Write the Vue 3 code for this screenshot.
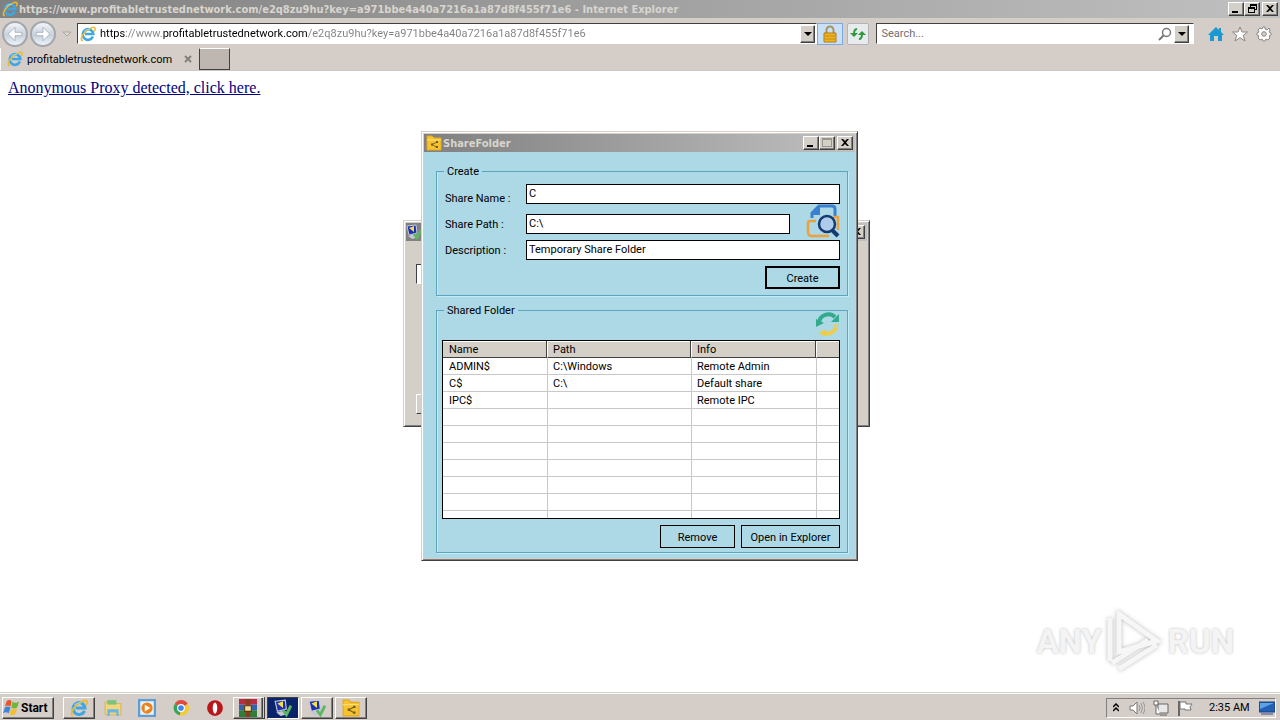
<template>
  <div class="desktop">
    <svg class="sprite" aria-hidden="true">
      <symbol id="ie" viewBox="0 0 16 16">
        <path d="M12.9 10.6A5.3 5.3 0 1 1 13.3 8H5" fill="none" stroke="#3fa6e2" stroke-width="2.600" />
        <path d="M3 14.6C0 14.8 1 9.6 6 5.2 10 1.800 15 0 15.200 2.600c.1 1-.4 2-1 2.800" fill="none" stroke="#efb92a" stroke-width="1.500" />
        <path d="M4 5.500C5.500 3.600 8 3 10 3.600" fill="none" stroke="#8fd8f8" stroke-width="1" />
      </symbol>
      <symbol id="folder" viewBox="0 0 16 16">
        <path d="M1 1h5l2 2h7v12H1z" fill="#f7c331" stroke="#e3a81c" />
        <path d="M1 5h14" stroke="#ffe27a" />
        <path d="M11 7L6 9.500l5 3" fill="none" stroke="#7b6420" />
        <path d="M5 8.500h2v2H5zM10 6h2v2h-2zM10 11h2v2h-2z" fill="#6c5a26" />
      </symbol>
      <symbol id="monitor" viewBox="0 0 16 16">
        <path d="M1 2l9-1 1 8-8 2z" fill="#1c2fb4" stroke="#c9c9d8" />
        <path d="M3 4l5 4V2z" fill="#f2e33c" />
        <path d="M2 12l7-2 4 3-7 2z" fill="#c4c7ce" />
        <path d="M8 10l3 4 4-8" fill="none" stroke="#5cb860" stroke-width="2.500" />
      </symbol>
    </svg>

    <header class="browser">
      <div class="title-bar">
        <svg class="icon16"><use href="#ie" /></svg>
        <span class="title-text">https://www.profitabletrustednetwork.com/e2q8zu9hu?key=a971bbe4a40a7216a1a87d8f455f71e6 - Internet Explorer</span>
        <div class="caption">
          <button v-for="kind in ['min', 'restore', 'close']" :key="kind" :class="['cap', kind]" :aria-label="kind">
            <svg viewBox="0 0 12 10"><path :d="glyphs[kind]" /></svg>
          </button>
        </div>
      </div>

      <div class="toolbar">
        <div class="nav">
          <button class="round" aria-label="Back">
            <svg viewBox="0 0 26 26"><path d="M13 5l-8 8 8 8v-6h8v-4h-8z" /></svg>
          </button>
          <button class="round" aria-label="Forward">
            <svg viewBox="0 0 26 26"><path d="M13 5l8 8-8 8v-6H5v-4h8z" /></svg>
          </button>
          <svg class="history" viewBox="0 0 10 6"><path d="M1 1h8L5 5z" fill="#dedad6" stroke="#aaa6a0" /></svg>
        </div>
        <div class="field address">
          <svg class="icon16"><use href="#ie" /></svg>
          <input v-model="url" class="url" type="text" aria-label="Address">
          <button class="drop" aria-label="Show address list"><svg viewBox="0 0 8 4"><path d="M0 0h8L4 4z" /></svg></button>
        </div>
        <button class="lock" aria-label="Security report">
          <svg viewBox="0 0 16 18">
            <path d="M4.500 9V5a3.500 3.500 0 0 1 7 0v4" fill="none" stroke="#a8945c" stroke-width="2" />
            <path d="M2 8h12v9H2z" fill="#eeb422" stroke="#b67c10" />
            <path d="M3 11h10M3 14h10" stroke="#c98a12" />
          </svg>
        </button>
        <button class="refresh" aria-label="Refresh">
          <svg viewBox="0 0 16 16">
            <path d="M7 3C4.500 3 4 5 4 8M9 13c2.500 0 3-2 3-5" fill="none" stroke="#2f9a3c" stroke-width="2" />
            <path d="M0 7h8l-4 4zM8 9h8l-4-4z" fill="#2f9a3c" />
          </svg>
        </button>
        <div class="field search">
          <input v-model="query" type="text" placeholder="Search..." aria-label="Search">
          <svg class="lens" viewBox="0 0 14 14"><path d="M1 13l5-5" stroke-width="2" /><circle cx="8.500" cy="5.500" r="4" stroke-width="1.500" /></svg>
          <button class="drop" aria-label="Search providers"><svg viewBox="0 0 8 4"><path d="M0 0h8L4 4z" /></svg></button>
        </div>
        <div class="tools">
          <button aria-label="Home">
            <svg viewBox="0 0 16 16"><path d="M8 1L0 9h2v6h4v-5h4v5h4V9h2l-3-3V2h-2v2z" fill="#1b9ad2" /></svg>
          </button>
          <button aria-label="Favorites">
            <svg viewBox="0 0 16 16"><path d="M8 1l2 5h5.500l-4.300 3.500L13 15l-5-3.300L3 15l1.800-5.500L.5 6H6z" fill="#fff" stroke="#8a8783" /></svg>
          </button>
          <button aria-label="Tools">
            <svg viewBox="0 0 16 16">
              <path d="M7 1h2v2l2 1 2-2 1 2-1 2 2 1v2l-2 1 1 2-2 2-2-1-1 2H7l-1-2-2 1-2-2 1-2-2-1V7l2-1-1-2 2-2 2 1z" fill="#fff" stroke="#8a8783" />
              <circle cx="8" cy="8" r="2.300" fill="#d4cdc8" stroke="#8a8783" />
            </svg>
          </button>
        </div>
      </div>

      <nav class="tabs">
        <div class="tab">
          <svg class="icon16"><use href="#ie" /></svg>
          <span>profitabletrustednetwork.com</span>
          <button class="tab-close" aria-label="Close tab"><svg viewBox="0 0 8 8"><path d="M1 1l6 6M7 1L1 7" /></svg></button>
        </div>
        <button class="new-tab" aria-label="New tab"></button>
      </nav>
    </header>

    <main class="page">
      <a class="notice" href="#">Anonymous Proxy detected, click here.</a>

      <section class="window back-window">
        <div class="title-bar">
          <svg class="icon16"><use href="#monitor" /></svg>
          <div class="caption">
            <button class="cap close" aria-label="close"><svg viewBox="0 0 12 10"><path :d="glyphs.close" /></svg></button>
          </div>
        </div>
        <div class="back-body">
          <input type="text" aria-label="Value">
          <button aria-label="OK"></button>
        </div>
      </section>

      <section class="window share-window">
        <div class="title-bar">
          <svg class="icon16"><use href="#folder" /></svg>
          <span class="title-text">ShareFolder</span>
          <div class="caption">
            <button v-for="kind in ['min', 'max', 'close']" :key="kind" :class="['cap', kind]" :aria-label="kind">
              <svg viewBox="0 0 12 10"><path :d="glyphs[kind]" /></svg>
            </button>
          </div>
        </div>
        <div class="share-body">
          <fieldset>
            <legend>Create</legend>
            <form class="create-form" @submit.prevent>
              <label for="share-name">Share Name :</label>
              <input id="share-name" v-model="form.name" class="wide" type="text">
              <label for="share-path">Share Path :</label>
              <input id="share-path" v-model="form.path" type="text">
              <button class="browse" type="button" aria-label="Browse">
                <svg viewBox="0 0 34 34">
                  <path d="M6 14V9l7-7h13q3 0 3 3v7" fill="none" stroke="#3b7fd0" stroke-width="3" />
                  <path d="M5 11l9-9v9z" fill="#3b7fd0" />
                  <path d="M10 17H4q-2 0-2 2v9q0 4 4 4h17M27 13h5v13" fill="none" stroke="#eda13b" stroke-width="2.500" />
                  <circle cx="21" cy="20" r="8" fill="#aecbea" stroke="#143a72" stroke-width="2.500" />
                  <path d="M26 26l6 6" stroke="#143a72" stroke-width="4" />
                </svg>
              </button>
              <label for="share-desc">Description :</label>
              <input id="share-desc" v-model="form.description" class="wide" type="text">
              <button class="flat default" type="submit">Create</button>
            </form>
          </fieldset>

          <fieldset class="shared">
            <legend>Shared Folder</legend>
            <div class="list-tools">
              <button class="reload" type="button" aria-label="Reload">
                <svg viewBox="0 0 24 24">
                  <path d="M3 12C3 2 14 0 19 5" fill="none" stroke="#31ab8b" stroke-width="4" />
                  <path d="M23 2v8h-8zM0 7v8l8-4z" fill="#31ab8b" />
                  <path d="M20 15c-2 7-10 8-15 5" fill="none" stroke="#efcd45" stroke-width="4" />
                  <path d="M23 14h-6l4-2zM3 22l7-5v7z" fill="#efcd45" />
                </svg>
              </button>
            </div>
            <div class="list">
              <table>
                <thead>
                  <tr><th class="c-name">Name</th><th class="c-path">Path</th><th class="c-info">Info</th><th></th></tr>
                </thead>
                <tbody>
                  <tr v-for="(row, i) in rows" :key="i">
                    <td>{{ row.name }}</td><td>{{ row.path }}</td><td>{{ row.info }}</td><td></td>
                  </tr>
                </tbody>
              </table>
            </div>
            <div class="actions">
              <button class="flat" type="button">Remove</button>
              <button class="flat open" type="button">Open in Explorer</button>
            </div>
          </fieldset>
        </div>
      </section>

      <div class="watermark">
        <span>ANY</span>
        <svg viewBox="0 0 56 64">
          <path d="M3 8v43M12 4v38l38-11zM12 4l38 27M12 59l38-24M5 53l36-23" />
        </svg>
        <span>RUN</span>
      </div>
    </main>

    <footer class="taskbar">
      <button class="start">
        <svg viewBox="0 0 18 18">
          <path d="M4 2q3-2 5 0L8 8q-3-2-6 0z" fill="#e8542c" />
          <path d="M10 3q3 2 7 0l-2 6q-3 2-6 0z" fill="#71b436" />
          <path d="M2 9q3-2 6 0l-2 6q-3-2-6 0z" fill="#3f86d8" />
          <path d="M9 10q3 2 6 0l-2 6q-3 2-6 0z" fill="#f5be2b" />
        </svg>
        Start
      </button>
      <div class="tasks">
        <button class="task raised" aria-label="Internet Explorer"><svg viewBox="0 0 16 16"><use href="#ie" /></svg></button>
        <button class="task" aria-label="Windows Explorer">
          <svg viewBox="0 0 16 16">
            <path d="M1 3h5l1 1h8v10H1z" fill="#f0d67c" stroke="#dbb95c" />
            <path d="M3 1h8v4H3z" fill="#7cc47c" />
            <path d="M3 15V9h10v6h-2v-3H5v3z" fill="#69b6e4" />
          </svg>
        </button>
        <button class="task" aria-label="Media Player">
          <svg viewBox="0 0 16 16">
            <path d="M1 1h14v14H1z" fill="#e8f2fa" stroke="#5c9fd6" stroke-width="2" />
            <circle cx="8" cy="8" r="5" fill="#f08118" />
            <path d="M6 5l5 3-5 3z" fill="#fff" />
          </svg>
        </button>
        <button class="task" aria-label="Chrome">
          <svg viewBox="0 0 16 16">
            <path d="M8 8L2.400 4.500a6.500 6.500 0 0 1 11.600 0z" fill="#df4b3c" />
            <path d="M8 8L2.400 4.500A6.500 6.500 0 0 0 7 14.400z" fill="#36a556" />
            <path d="M8 8l6-3.500a6.500 6.500 0 0 1-7 9.900z" fill="#f7c933" />
            <circle cx="8" cy="8" r="3" fill="#4187ee" stroke="#fff" />
          </svg>
        </button>
        <button class="task" aria-label="Opera">
          <svg viewBox="0 0 16 16"><circle cx="8" cy="8" r="7" fill="#bb1419" /><ellipse cx="8" cy="8" rx="2" ry="5" fill="#fff" /></svg>
        </button>
        <button class="task raised stacked" aria-label="WinRAR">
          <svg viewBox="0 0 16 16">
            <path d="M0 0h16v5H0z" fill="#b92c45" /><path d="M0 5h16v5H0z" fill="#3564ae" /><path d="M0 10h16v6H0z" fill="#307c3b" />
            <path d="M6 0h4v16H6z" fill="#8c3c1c" /><path d="M5 6h6v5H5z" fill="#f1dc9b" stroke="#603c12" />
          </svg>
        </button>
        <button class="task raised active" aria-label="Remote session"><svg viewBox="0 0 16 16"><use href="#monitor" /></svg></button>
        <button class="task raised" aria-label="Connections"><svg viewBox="0 0 16 16"><use href="#monitor" /></svg></button>
        <button class="task raised" aria-label="ShareFolder"><svg viewBox="0 0 16 16"><use href="#folder" /></svg></button>
      </div>
      <div class="tray">
        <svg class="chev" viewBox="0 0 6 9"><path d="M0 4l3-3 3 3M0 8l3-3 3 3" fill="none" stroke="#000" stroke-width="1.500" /></svg>
        <svg class="icon16" viewBox="0 0 16 16"><path d="M1 6h3l4-4v12l-4-4H1z" fill="#fff" stroke="#777" /><path d="M10 5q2 3 0 6M12 3q3 5 0 10M14 2q4 6 0 12" fill="none" stroke="#999" /></svg>
        <svg class="icon16" viewBox="0 0 16 16"><path d="M5 4h10v9H5zM7 15h7" fill="#e8e8e8" stroke="#666" /><path d="M1 1h4v4H1zM3 5v9h4" fill="#fff" stroke="#666" /></svg>
        <svg class="icon16" viewBox="0 0 16 16"><path d="M2 1v15" stroke="#666" stroke-width="2" /><path d="M3 2h6v2h6l-2 3 1 3H8V9H3z" fill="#fff" stroke="#777" /></svg>
        <time>2:35 AM</time>
        <svg class="icon16" viewBox="0 0 16 16"><path d="M0 2h16v10H0z" fill="#2360b5" stroke="#174079" /><path d="M1 3h14L1 9z" fill="#5da2e4" /><path d="M2 14h12" stroke="#88a" stroke-width="2" /></svg>
      </div>
    </footer>
  </div>
</template>

<script setup>
import { reactive, ref } from 'vue';

const url = ref('https://www.profitabletrustednetwork.com/e2q8zu9hu?key=a971bbe4a40a7216a1a87d8f455f71e6');
const query = ref('');

const form = reactive({
  name: 'C',
  path: 'C:\\',
  description: 'Temporary Share Folder'
});

const shares = [
  { name: 'ADMIN$', path: 'C:\\Windows', info: 'Remote Admin' },
  { name: 'C$', path: 'C:\\', info: 'Default share' },
  { name: 'IPC$', path: '', info: 'Remote IPC' }
];
// the list always shows grid lines down to its bottom edge
const rows = [...shares, ...Array.from({ length: 7 }, () => ({}))];

const glyphs = {
  min: 'M2 7h6v2H2z',
  max: 'M1 0h10v9H1zM2 2v6h8V2z',
  restore: 'M4 0h7v6H9v3H2V3h2zM5 2v1h4v2h1V2zM3 5v3h5V5z',
  close: 'M2 1h2l2 2 2-2h2L7 4.500 10 8H8L6 6 4 8H2l3-3.500z'
};
</script>

<style>
body {
  margin: 0;
}
</style>

<style scoped>
.desktop {
  display: flex;
  flex-direction: column;
  min-height: 100vh;
  background: #fff;
  color: #000;
  font-family: Roboto, sans-serif;
  font-size: 11px;
}
.sprite {
  position: absolute;
  width: 0;
  height: 0;
}
* {
  box-sizing: border-box;
}
button,
input {
  margin: 0;
  padding: 0;
  border: 0;
  border-radius: 0;
  background: none;
  color: inherit;
  font: inherit;
}
svg {
  display: block;
  flex: none;
}
.icon16 {
  width: 16px;
  height: 16px;
}
.browser {
  background: #d4cdc8;
}
.title-bar {
  display: flex;
  align-items: center;
  gap: 1px;
  height: 18px;
  padding: 0 2px;
  background: linear-gradient(90deg, #808080, #c0c0c0);
  color: #d8d5ce;
  font-family: "DejaVu Sans Condensed", "DejaVu Sans", sans-serif;
  font-weight: bold;
}
.title-text {
  white-space: nowrap;
}
.caption {
  display: flex;
  margin-left: auto;
}
.cap,
.drop {
  display: flex;
  align-items: center;
  justify-content: center;
  width: 16px;
  height: 14px;
  border: 1px solid;
  border-color: #fff #404040 #404040 #fff;
  background: #d4d0c8;
  box-shadow: inset -1px -1px #808080;
}
.cap svg {
  width: 12px;
  height: 10px;
}
.cap.close {
  margin-left: 2px;
}
.cap path {
  fill: #000;
  fill-rule: evenodd;
}
.cap.max path {
  fill: #99958e;
}
.toolbar {
  display: flex;
  align-items: center;
  height: 30px;
  padding-right: 8px;
  border-top: 1px solid #d0d0c8;
}
.nav {
  display: flex;
  flex: none;
  align-items: center;
  gap: 2px;
  width: 77px;
  padding-left: 2px;
}
.round {
  width: 26px;
  height: 26px;
  border: 2px solid #a3a6ab;
  border-radius: 50%;
  background: linear-gradient(#f3f5f8, #c7d0dc 55%, #edf3f8);
}
.round svg {
  width: 22px;
  height: 22px;
}
.round path {
  fill: #fff;
  stroke: #a3adba;
}
.history {
  width: 10px;
  height: 6px;
  margin-left: 4px;
}
.field {
  display: flex;
  align-items: center;
  height: 21px;
  border: 1px solid;
  border-color: #404040 #fff #fff #404040;
  background: #fff;
}
.address {
  flex: 734;
  padding: 0 1px 0 2px;
}
.url {
  flex: 1;
  height: 18px;
  margin-left: 4px;
  /* host stays black, the rest of the address is dimmed */
  background: linear-gradient(90deg, #000 25px, #808080 25px 62px, #000 62px 208px, #808080 208px);
  background-clip: text;
  -webkit-text-fill-color: transparent;
}
.drop {
  width: 15px;
  height: 18px;
}
.drop svg {
  width: 8px;
  height: 4px;
}
.lock {
  display: flex;
  align-items: center;
  justify-content: center;
  width: 26px;
  height: 22px;
  border: 1px solid #7da9dc;
  background: #c8e0f8;
}
.lock svg {
  width: 16px;
  height: 18px;
}
.refresh {
  display: flex;
  align-items: center;
  justify-content: center;
  width: 22px;
  height: 22px;
  margin: 0 7px 0 4px;
  border: 1px solid #b4b4b8;
  border-radius: 2px;
  background: #e8ebee;
}
.refresh svg {
  width: 16px;
  height: 16px;
}
.search {
  flex: 307;
  padding: 0 4px;
}
.search input {
  flex: 1;
}
.search input::placeholder {
  color: #707070;
  opacity: 1;
}
.lens {
  width: 14px;
  height: 14px;
  margin-right: 2px;
  fill: none;
  stroke: #777;
}
.tools {
  display: flex;
  gap: 8px;
  margin-left: 14px;
}
.tools svg {
  width: 16px;
  height: 16px;
}
.tabs {
  display: flex;
  align-items: center;
  gap: 2px;
  height: 23px;
  border-bottom: 1px solid #cac9c5;
}
.tab {
  display: flex;
  align-items: center;
  gap: 4px;
  width: 197px;
  height: 22px;
  padding: 0 5px 0 6px;
  border-left: 1px solid #fff;
}
.tab span {
  white-space: nowrap;
}
.tab-close {
  margin-left: auto;
}
.tab-close svg {
  width: 8px;
  height: 8px;
  stroke: #85817c;
  stroke-width: 2;
}
.new-tab {
  width: 31px;
  height: 22px;
  border: 1px solid;
  border-color: #fff #404040 #404040;
  background: #beb6b1;
}
.page {
  position: relative;
  flex: 1;
  min-height: 500px;
  padding: 8px;
  overflow: hidden;
}
.notice {
  color: #000080;
  font-family: "Liberation Serif", serif;
  font-size: 16px;
  line-height: 18px;
}
.window {
  position: absolute;
  padding: 1px;
  border: 1px solid;
  border-color: #d4d0c8 #404040 #404040 #d4d0c8;
  background: #d4d0c8;
  box-shadow: inset 1px 1px #fff, inset -1px -1px #808080;
}
.window .title-bar {
  margin: 1px 1px 0;
}
.back-window {
  top: 149px;
  left: calc(50% - 237px);
  width: 467px;
  height: 207px;
}
.back-window .title-bar {
  padding-left: 0;
}
.back-body {
  display: flex;
  flex-direction: column;
  justify-content: space-between;
  align-items: flex-start;
  height: 173px;
  padding: 23px 11px 0;
}
.back-body input,
.back-body button {
  width: 120px;
  height: 20px;
  border: 1px solid;
  border-color: #404040 #fff #fff #404040;
  background: #fff;
}
.back-body button {
  width: 75px;
  border-color: #fff #404040 #404040 #fff;
  background: #d4d0c8;
}
.share-window {
  top: 60px;
  left: calc(50% - 219px);
  width: 437px;
}
.share-body {
  display: flex;
  flex-direction: column;
  gap: 7px;
  margin: 0 1px 1px;
  padding: 12px 7px 5px 12px;
  background: #add8e6;
}
fieldset {
  min-width: 0;
  margin: 0;
  padding: 6px 7px 6px 8px;
  border: 1px solid #5ba5bf;
  box-shadow: inset 1px 0 #c2ecf8, 1px 1px #c2ecf8;
}
.shared {
  padding: 0 7px 4px 5px;
}
legend {
  height: 14px;
  margin-left: -1px;
  padding: 0 3px;
  line-height: 16px;
}
.shared legend {
  margin-left: 2px;
}
.create-form {
  display: grid;
  grid-template-columns: 81px 1fr 50px;
  grid-template-rows: 30px 26px 26px 23px;
  align-items: start;
}
.create-form label {
  line-height: 22px;
}
.create-form label:first-child {
  align-self: center;
}
.create-form input {
  width: 100%;
  height: 20px;
  padding: 0 2px 1px;
  border: 1px solid #000;
  background: #fff;
}
.create-form .wide {
  grid-column: 2 / 4;
}
.browse {
  align-self: end;
  justify-self: end;
  margin-bottom: 2px;
}
.browse svg {
  width: 34px;
  height: 34px;
}
.flat {
  width: 75px;
  height: 23px;
  padding-top: 1px;
  border: 1px solid #000;
  background: #add8e6;
}
.default {
  grid-column: 2 / 4;
  justify-self: end;
  border-width: 2px;
}
.list-tools {
  display: flex;
  justify-content: flex-end;
  height: 28px;
  margin-top: -5px;
}
.reload svg {
  width: 24px;
  height: 24px;
}
.list-tools button {
  height: 24px;
}
.list {
  height: 179px;
  overflow: hidden;
  border: 1px solid #000;
  background: #fff;
}
table {
  width: 100%;
  table-layout: fixed;
  border-collapse: separate;
  border-spacing: 0;
}
th,
td {
  height: 17px;
  padding: 2px 0 0 5px;
  border-right: 1px solid #c8c8c8;
  border-bottom: 1px solid #c8c8c8;
  line-height: 14px;
  text-align: left;
  font-weight: normal;
}
th:first-child,
td:first-child {
  padding-left: 6px;
}
td:last-child,
th:last-child {
  border-right: 0;
}
th {
  border-right-color: #fff;
  border-bottom-color: #404040;
  background: #d4d0c8;
  box-shadow: inset -1px 0 #404040, inset 0 1px #fff;
}
th:last-child {
  box-shadow: inset 0 1px #fff;
}
.c-name {
  width: 105px;
}
.c-path {
  width: 144px;
}
.c-info {
  width: 125px;
}
.actions {
  display: flex;
  justify-content: flex-end;
  gap: 6px;
  margin-top: 6px;
}
.open {
  width: 99px;
}
.watermark {
  position: absolute;
  right: 46px;
  bottom: 18px;
  display: flex;
  align-items: center;
  gap: 5px;
  color: #f4f4f4;
  font-size: 33px;
  font-weight: bold;
  line-height: 64px;
  text-shadow: 0 0 3px #bbb;
}
.watermark svg {
  width: 56px;
  height: 64px;
  fill: none;
  stroke: #f6f6f6;
  stroke-width: 5;
  filter: drop-shadow(0 0 2px #bbb);
}
.taskbar {
  display: flex;
  align-items: center;
  height: 28px;
  padding: 2px 4px 0 2px;
  border-top: 1px solid #d4d0c8;
  background: #d4cdc8;
  box-shadow: inset 0 1px #fff;
}
.start {
  display: flex;
  align-items: center;
  gap: 1px;
  width: 52px;
  height: 22px;
  font-size: 12px;
  font-weight: bold;
}
.start svg {
  width: 17px;
  height: 17px;
}
.start,
.raised {
  border: 1px solid;
  border-color: #fff #404040 #404040 #fff;
  box-shadow: inset -1px -1px #808080;
}
.tasks {
  display: flex;
  gap: 2px;
  margin-left: 9px;
}
.task {
  display: flex;
  align-items: center;
  justify-content: center;
  width: 32px;
  height: 22px;
}
.task svg {
  width: 18px;
  height: 18px;
}
.stacked {
  border-right: 3px double #404040;
}
.active {
  border-color: #404040 #fff #fff #404040;
  background: #0a246a;
  box-shadow: none;
}
.tray {
  display: flex;
  align-items: center;
  gap: 8px;
  height: 20px;
  margin-left: auto;
  padding: 0 0 0 6px;
  border: 1px solid;
  border-color: #808080 #fff #fff #808080;
}
.chev {
  width: 6px;
  height: 9px;
  margin-right: 2px;
}
.tray time {
  min-width: 42px;
  margin-left: 8px;
}
</style>
